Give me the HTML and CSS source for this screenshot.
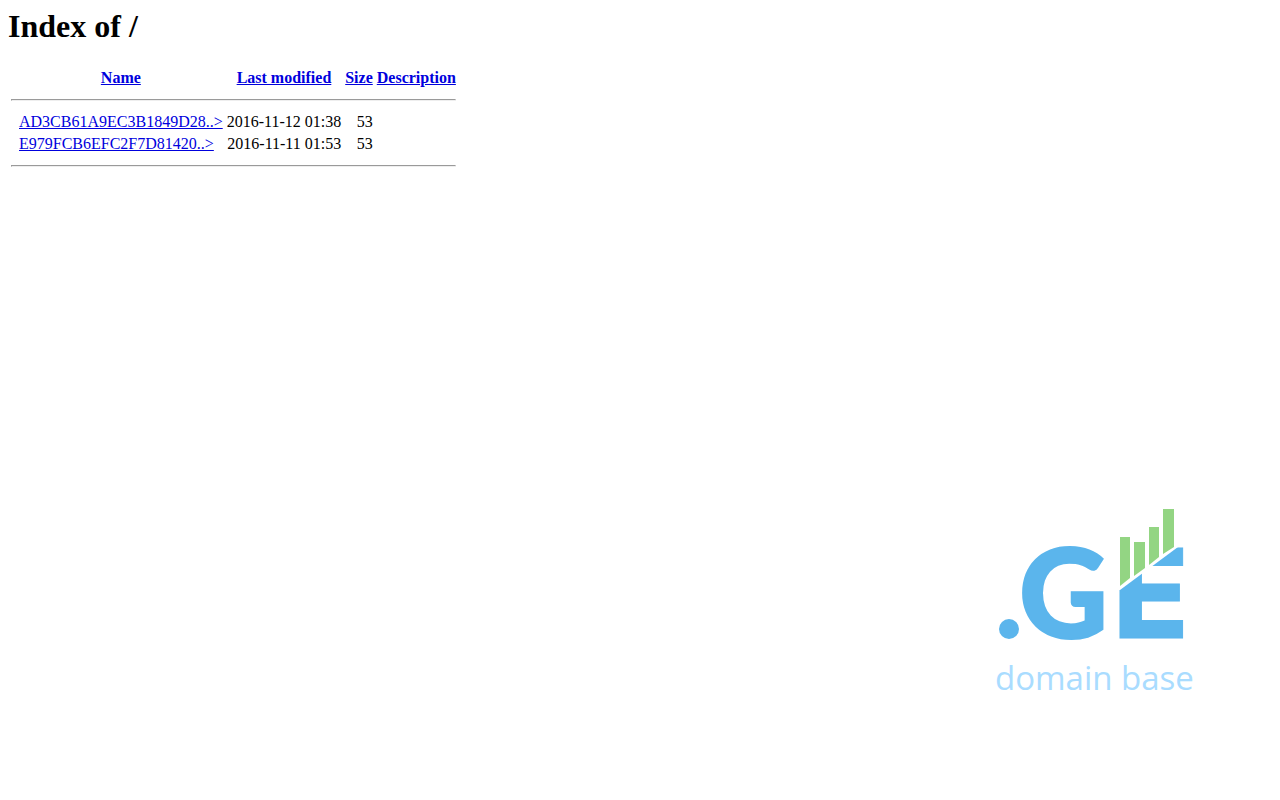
FILE: index.html
```html
<!DOCTYPE html>
<html lang="en">
<head>
    <meta charset="UTF-8">
    <meta name="viewport" content="width=device-width, initial-scale=1.0">
    <title>Index of /</title>
    <link rel="stylesheet" href="styles.css">
</head>
<body>
    <h1>Index of /</h1>

    <table class="listing">
        <tr>
            <th class="icon"></th>
            <th><a href="?C=N;O=D">Name</a></th>
            <th><a href="?C=M;O=A">Last modified</a></th>
            <th><a href="?C=S;O=A">Size</a></th>
            <th><a href="?C=D;O=A">Description</a></th>
        </tr>
        <tr><td colspan="5"><hr></td></tr>
        <tr>
            <td class="icon"></td>
            <td><a href="#">AD3CB61A9EC3B1849D28..&gt;</a></td>
            <td class="num">2016-11-12 01:38</td>
            <td class="num">&nbsp;53</td>
            <td></td>
        </tr>
        <tr>
            <td class="icon"></td>
            <td><a href="#">E979FCB6EFC2F7D81420..&gt;</a></td>
            <td class="num">2016-11-11 01:53</td>
            <td class="num">&nbsp;53</td>
            <td></td>
        </tr>
        <tr><td colspan="5"><hr></td></tr>
    </table>

    <footer>
        <svg class="logo" viewBox="0 0 210 200" width="210" height="200">
            <circle class="blue" cx="19" cy="129" r="10"/>
            <text class="blue letter-g" x="29" y="138">G</text>
            <text class="blue letter-e" x="123" y="138">E</text>
            <!-- cut through the E, under the bars -->
            <path class="cut" d="M124 40H188V47L130 90H124Z"/>
            <path class="green" d="M130 37h10v41l-10 8zM144 42h11v26l-11 8zM159 27h10v30l-10 8zM173 9h11v38l-11 7z"/>
            <text class="tagline" x="5" y="190">domain base</text>
        </svg>
    </footer>
</body>
</html>
```

FILE: styles.css
```css
body {
    font-family: "Liberation Serif", "Times New Roman", serif;
    display: flex;
    flex-direction: column;
    align-items: flex-start;
    box-sizing: border-box;
    min-height: 100vh;
    margin: 0;
    padding: 8px;
    background: #fff;
}
h1 {
    margin: 0 0 21px;
    line-height: 37px;
}
th.icon,
td.icon {
    width: 4px;
}
.num {
    text-align: right;
}
a {
    color: #0000dd;
}
footer {
    align-self: flex-end;
    margin-top: auto;
    padding: 0 72px 92px 0;
}
.logo {
    display: block;
}
.blue {
    fill: #5bb5ec;
}
.green {
    fill: #93d583;
}
.cut {
    fill: #fff;
}
.letter-g {
    font: 900 123px Lato, sans-serif;
    stroke: #5bb5ec;
    stroke-width: 2px;
}
.letter-e {
    font: 800 124px Inter, sans-serif;
    stroke: #5bb5ec;
    stroke-width: 1px;
}
.tagline {
    font: 33px "Open Sans", sans-serif;
    fill: #a9dcff;
}
```
